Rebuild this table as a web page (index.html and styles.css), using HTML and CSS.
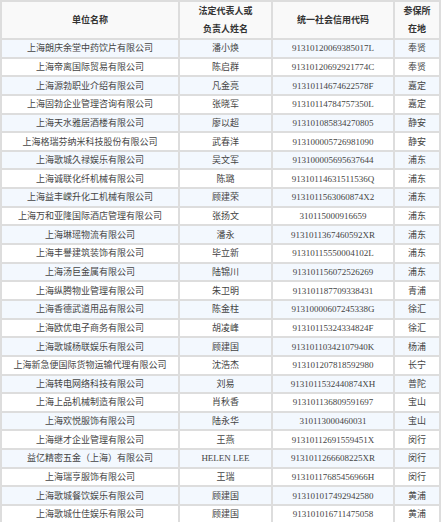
FILE: index.html
```html
<!DOCTYPE html>
<html lang="zh-CN">
<head>
<meta charset="utf-8">
<title>参保单位名单</title>
<link rel="stylesheet" href="styles.css">
</head>
<body>
<table class="list">
  <colgroup>
    <col class="c-name"><col class="c-person"><col class="c-code"><col class="c-area">
  </colgroup>
  <thead>
    <tr>
      <th>单位名称</th>
      <th>法定代表人或<br>负责人姓名</th>
      <th>统一社会信用代码</th>
      <th>参保所<br>在地</th>
    </tr>
  </thead>
  <tbody>
    <tr><td>上海朗庆余堂中药饮片有限公司</td><td>潘小焕</td><td>91310120069385017L</td><td>奉贤</td></tr>
    <tr><td>上海帝离国际贸易有限公司</td><td>陈启群</td><td>91310120692921774C</td><td>奉贤</td></tr>
    <tr><td>上海源勃职业介绍有限公司</td><td>凡金亮</td><td>91310114674622578F</td><td>嘉定</td></tr>
    <tr><td>上海固勃企业管理咨询有限公司</td><td>张晓军</td><td>91310114784757350L</td><td>嘉定</td></tr>
    <tr><td>上海天水雅居酒楼有限公司</td><td>廖以超</td><td>913101085834270805</td><td>静安</td></tr>
    <tr><td>上海格瑞芬纳米科技股份有限公司</td><td>武春洋</td><td>913100005726981090</td><td>静安</td></tr>
    <tr><td>上海歌城久禄娱乐有限公司</td><td>吴文军</td><td>913100005695637644</td><td>浦东</td></tr>
    <tr><td>上海诚联化纤机械有限公司</td><td>陈璐</td><td>91310114631511536Q</td><td>浦东</td></tr>
    <tr><td>上海益丰嵘升化工机械有限公司</td><td>顾建荣</td><td>9131011563060874X2</td><td>浦东</td></tr>
    <tr><td>上海万和亚隆国际酒店管理有限公司</td><td>张扬文</td><td>310115000916659</td><td>浦东</td></tr>
    <tr><td>上海琳瑶物流有限公司</td><td>潘永</td><td>9131011367460592XR</td><td>浦东</td></tr>
    <tr><td>上海丰譽建筑装饰有限公司</td><td>毕立新</td><td>91310115550004102L</td><td>浦东</td></tr>
    <tr><td>上海汤巨金属有限公司</td><td>陆锦川</td><td>913101156072526269</td><td>浦东</td></tr>
    <tr><td>上海纵腾物业管理有限公司</td><td>朱卫明</td><td>913101187709338431</td><td>青浦</td></tr>
    <tr><td>上海香德武道用品有限公司</td><td>陈金柱</td><td>91310000607245338G</td><td>徐汇</td></tr>
    <tr><td>上海欧优电子商务有限公司</td><td>胡凌峰</td><td>91310115324334824F</td><td>徐汇</td></tr>
    <tr><td>上海歌城杨联娱乐有限公司</td><td>顾建国</td><td>91310110342107940K</td><td>杨浦</td></tr>
    <tr><td>上海新急便国际货物运输代理有限公司</td><td>沈浩杰</td><td>913101207818592980</td><td>长宁</td></tr>
    <tr><td>上海转电网络科技有限公司</td><td>刘易</td><td>9131011532440874XH</td><td>普陀</td></tr>
    <tr><td>上海上品机械制造有限公司</td><td>肖秋香</td><td>913101136809591697</td><td>宝山</td></tr>
    <tr><td>上海欢悦服饰有限公司</td><td>陆永华</td><td>310113000460031</td><td>宝山</td></tr>
    <tr><td>上海继才企业管理有限公司</td><td>王燕</td><td>91310112691559451X</td><td>闵行</td></tr>
    <tr><td>益亿精密五金（上海）有限公司</td><td>HELEN LEE</td><td>9131011266608225XR</td><td>闵行</td></tr>
    <tr><td>上海瑞亨服饰有限公司</td><td>王瑞</td><td>91310117685456966H</td><td>闵行</td></tr>
    <tr><td>上海歌城餐饮娱乐有限公司</td><td>顾建国</td><td>913101017492942580</td><td>黄浦</td></tr>
    <tr><td>上海歌城仕佳娱乐有限公司</td><td>顾建国</td><td>913101016711475058</td><td>黄浦</td></tr>
  </tbody>
</table>
</body>
</html>
```

FILE: styles.css
```css
html, body {
  margin: 0;
  padding: 0;
  background: #ffffff;
}

.list {
  border-collapse: separate;
  border-spacing: 2px;
  background: #dddddd;
  width: 441px;
  table-layout: fixed;
  font-family: "Liberation Serif", "Noto Sans CJK SC", serif;
  font-size: 9px;
  color: #444444;
}

.c-name { width: 176px; }
.c-person { width: 91px; }
.c-code { width: 120px; }
.c-area { width: 44px; }

.list th,
.list td {
  padding: 0;
  text-align: center;
  vertical-align: middle;
  white-space: nowrap;
  overflow: hidden;
}

.list th {
  height: 33px;
  line-height: 18px;
  font-weight: bold;
  color: #333333;
  background: #f9f9f9;
}

.list td {
  height: 16.65px;
  line-height: 16px;
}

.list tbody tr:nth-child(odd) td {
  background: #f3f8fe;
}

.list tbody tr:nth-child(even) td {
  background: #ffffff;
}
```
